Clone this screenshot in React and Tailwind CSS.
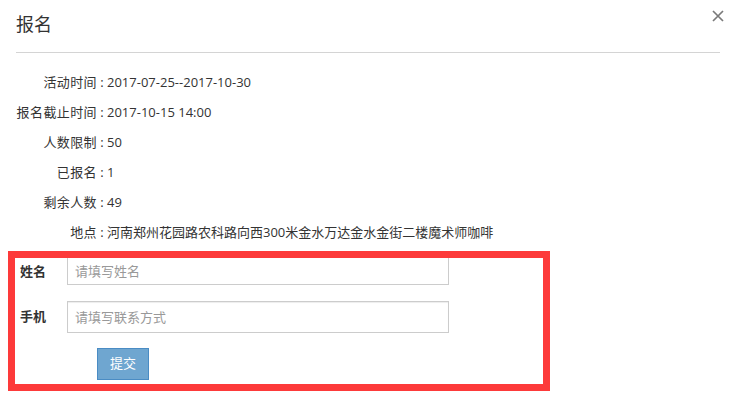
const INFO = [
  { label: '活动时间', value: '2017-07-25--2017-10-30' },
  { label: '报名截止时间', value: '2017-10-15 14:00' },
  { label: '人数限制', value: '50' },
  { label: '已报名', value: '1' },
  { label: '剩余人数', value: '49' },
  { label: '地点', value: '河南郑州花园路农科路向西300米金水万达金水金街二楼魔术师咖啡' },
];

const font = { fontFamily: '"Open Sans", "Noto Sans CJK SC", sans-serif' };

export default function App() {
  return (
    <div className="relative w-[734px] h-[402px] overflow-hidden bg-white text-[#333]" style={font}>
      <button className="absolute top-[10px] right-[10px] w-3 h-3 flex items-center justify-center">
        <svg width="12" height="12" viewBox="0 0 12 12">
          <path d="M1 1 L11 11 M11 1 L1 11" stroke="#7a7a7a" strokeWidth="1.7" />
        </svg>
      </button>

      <div className="mx-4 mr-[14px] pt-[12px] pb-[15px] border-b border-[#d4d4d4]">
        <h3 className="text-[18px] leading-[25px] font-normal text-[#333]">报名</h3>
      </div>

      <div className="mt-[15px] pl-4">
        {INFO.map((row) => (
          <div key={row.label} className="flex h-[30px] items-center text-[13px]">
            <span className="w-[81px] text-right shrink-0 tracking-[0.4px]">{row.label}</span>
            <span className="w-[10px] text-center shrink-0">:</span>
            <span>{row.value}</span>
          </div>
        ))}
      </div>

      <div className="ml-2 mt-[3px] w-[542px] h-[140px] border-[7px] border-[#fd3a3a]">
        <div className="flex items-center">
          <label className="w-[52px] pl-[5px] text-[13px] font-bold text-[#333]">姓名</label>
          <input
            className="w-[382px] h-[27px] border border-t-0 border-[#ccc] px-[7px] text-[13px] outline-none placeholder:text-[#999]"
            placeholder="请填写姓名"
          />
        </div>
        <div className="flex items-center mt-4">
          <label className="w-[52px] pl-[5px] text-[13px] font-bold text-[#333]">手机</label>
          <input
            className="w-[382px] h-[32px] border border-[#ccc] px-[7px] text-[13px] outline-none shadow-[inset_0_1px_1px_rgba(0,0,0,0.075)] placeholder:text-[#999]"
            placeholder="请填写联系方式"
          />
        </div>
        <button className="mt-[15px] ml-[82px] w-[52px] h-[32px] bg-[#6fa6d0] border border-[#4a8cc4] text-white text-[13px]">
          提交
        </button>
      </div>
    </div>
  );
}
